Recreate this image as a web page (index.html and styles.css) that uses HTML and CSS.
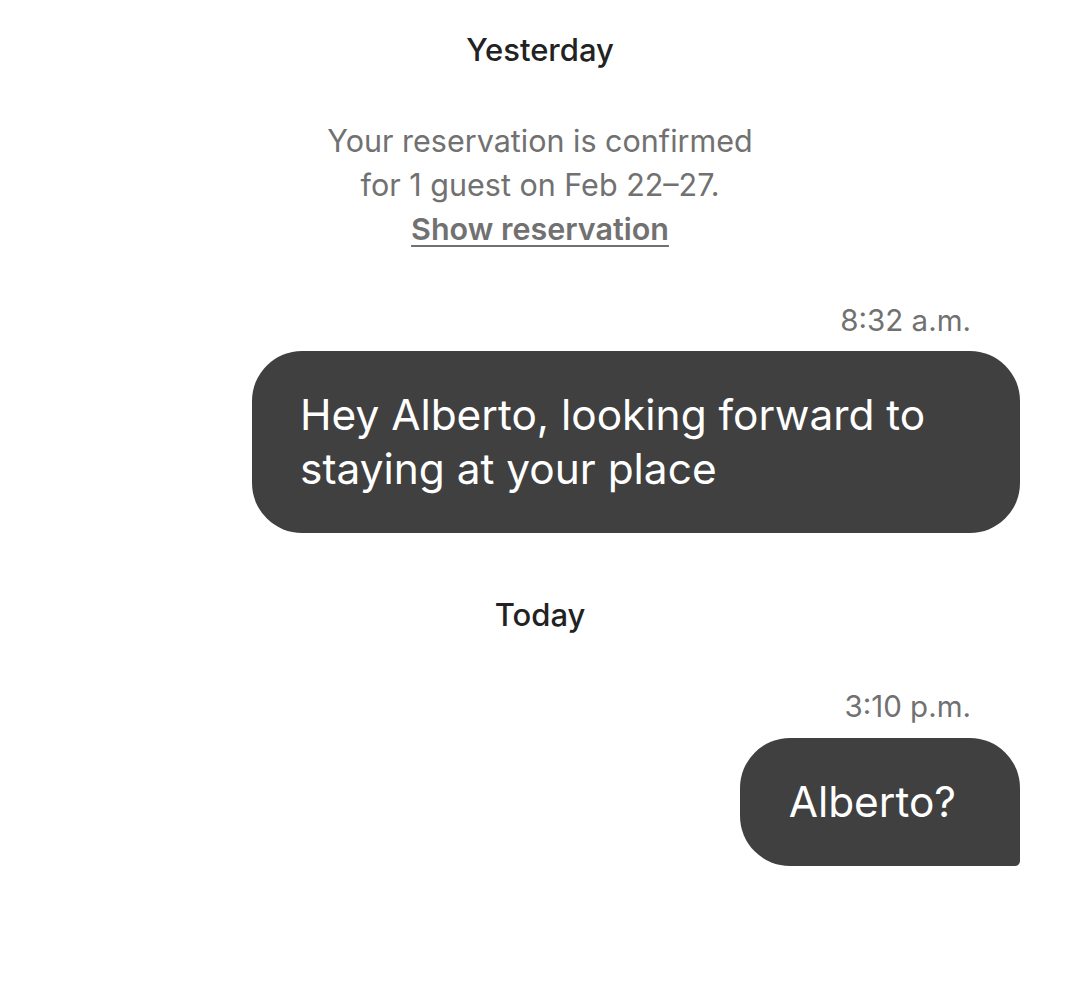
FILE: index.html
```html
<!DOCTYPE html>
<html lang="en">
<head>
<meta charset="utf-8">
<title>Messages</title>
<link rel="stylesheet" href="styles.css">
</head>
<body>
<main class="thread">
  <div class="day day-first">Yesterday</div>
  <div class="notice">
    <p>Your reservation is confirmed<br>for 1 guest on Feb 22–27.</p>
    <a class="notice-link" href="#">Show reservation</a>
  </div>

  <div class="msg msg-first">
    <div class="time">8:32 a.m.</div>
    <div class="bubble bubble-wide">Hey Alberto, looking forward to staying at your place</div>
  </div>

  <div class="day day-today">Today</div>

  <div class="msg msg-second">
    <div class="time">3:10 p.m.</div>
    <div class="bubble bubble-last">Alberto?</div>
  </div>
</main>
</body>
</html>
```

FILE: styles.css
```css
* { box-sizing: border-box; }
html, body { margin: 0; padding: 0; background: #ffffff; }
body {
  font-family: Inter, "Noto Sans", "Liberation Sans", sans-serif;
  color: #222222;
  width: 1080px;
}
.thread {
  display: flex;
  flex-direction: column;
  padding: 30px 60px 0 60px;
}
.day {
  text-align: center;
  font-size: 31px;
  font-weight: 500;
  line-height: 40px;
  color: #222222;
}
.day-today { margin-top: 62px; }
.notice {
  margin-top: 49px;
  display: flex;
  flex-direction: column;
  align-items: center;
  text-align: center;
  color: #717171;
  font-size: 30.5px;
  line-height: 44px;
}
.notice p { margin: 0; }
.notice-link {
  color: #717171;
  font-weight: 600;
  text-decoration: underline;
  text-decoration-thickness: 2px;
  text-underline-offset: 5px;
}
.msg {
  display: flex;
  flex-direction: column;
  align-items: flex-end;
}
.msg-first { margin-top: 49px; }
.msg-second { margin-top: 51px; }
.time {
  font-size: 29.5px;
  line-height: 40px;
  color: #717171;
  padding-right: 49px;
}
.bubble {
  margin-top: 11px;
  background: #404040;
  color: #ffffff;
  font-size: 42.4px;
  line-height: 54px;
  padding: 37px 48px;
  border-radius: 50px;
}
.bubble-wide { width: 768px; }
.bubble-last {
  margin-top: 12px;
  border-radius: 50px 50px 5px 50px;
  padding: 37px 64px 37px 49px;
}
```
